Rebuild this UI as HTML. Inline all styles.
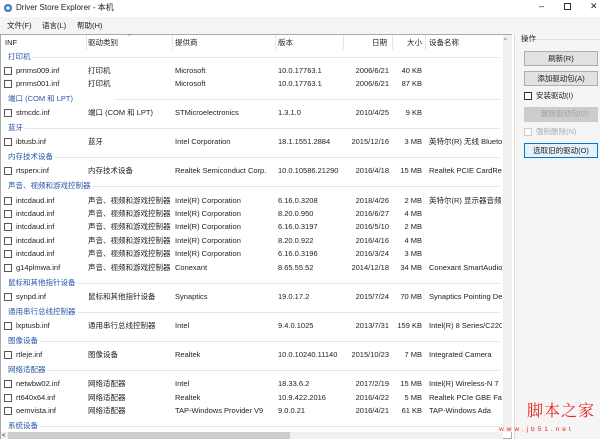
<!DOCTYPE html><html><head><meta charset="utf-8"><style>
*{margin:0;padding:0;box-sizing:border-box}
body{width:600px;height:439px;overflow:hidden;background:#fff;font-family:"Liberation Sans","Noto Sans CJK SC",sans-serif;font-size:7.5px;color:#222;position:relative}
.a{position:absolute;white-space:nowrap;line-height:10px}
.g{color:#2a55a8}
.ln{position:absolute;height:1px;background:#dfe6f0}
.cb{position:absolute;left:4px;width:8px;height:8px;border:1px solid #555;background:#fff}
.r{text-align:right}
.btn{position:absolute;left:524px;width:74px;height:15px;border:1px solid #adadad;background:#e1e1e1;text-align:center;line-height:13px;font-size:7.5px}
</style></head><body>
<div class="a" style="left:0;top:0;width:600px;height:17px;background:#fff"></div>
<svg class="a" style="left:3px;top:3px" width="10" height="10" viewBox="0 0 10 10"><circle cx="5" cy="5" r="4" fill="#3a78b8"/><circle cx="5" cy="5" r="1.8" fill="#fff"/></svg>
<div class="a" style="left:16px;top:3px;font-size:8px">Driver Store Explorer - 本机</div>
<div class="a" style="left:539px;top:1px;font-size:9px">–</div>
<div class="a" style="left:564px;top:3px;width:7px;height:7px;border:1px solid #333"></div>
<div class="a" style="left:590px;top:1px;font-size:9px">✕</div>
<div class="a" style="left:0;top:17px;width:600px;height:17px;background:#f4f4f4"></div>
<div class="a" style="left:7px;top:21px">文件(F)</div>
<div class="a" style="left:42px;top:21px">语言(L)</div>
<div class="a" style="left:77px;top:21px">帮助(H)</div>
<div class="a" style="left:0;top:34px;width:512px;height:405px;border:1px solid #aaa;background:#fff"></div>
<div class="a" style="left:503px;top:35px;width:9px;height:397px;background:#f0f0f0"></div>
<div class="a" style="left:504px;top:36px;font-size:6px;color:#555">^</div>
<div class="a" style="left:1px;top:432px;width:502px;height:7px;background:#f0f0f0"></div>
<div class="a" style="left:8px;top:432px;width:282px;height:7px;background:#cdcdcd"></div>
<div class="a" style="left:2px;top:431px;font-size:6px">&lt;</div>
<div class="a" style="left:514px;top:34px;width:86px;height:405px;background:#f5f5f5;border-left:1px solid #ddd"></div>
<div class="a" style="left:5px;top:38px">INF</div>
<div class="a" style="left:88px;top:38px">驱动类别</div>
<div class="a" style="left:128px;top:32px;font-size:6px;color:#777">^</div>
<div class="a" style="left:175px;top:38px">提供商</div>
<div class="a" style="left:278px;top:38px">版本</div>
<div class="a" style="left:372px;top:38px">日期</div>
<div class="a" style="left:407px;top:38px">大小</div>
<div class="a" style="left:429px;top:38px">设备名称</div>
<div class="a" style="left:86px;top:35px;width:1px;height:15px;background:#e5e5e5"></div>
<div class="a" style="left:172px;top:35px;width:1px;height:15px;background:#e5e5e5"></div>
<div class="a" style="left:275px;top:35px;width:1px;height:15px;background:#e5e5e5"></div>
<div class="a" style="left:343px;top:35px;width:1px;height:15px;background:#e5e5e5"></div>
<div class="a" style="left:392px;top:35px;width:1px;height:15px;background:#e5e5e5"></div>
<div class="a" style="left:425px;top:35px;width:1px;height:15px;background:#e5e5e5"></div>
<div id="rows"></div>
<div class="a" style="left:521px;top:34px">操作</div>
<div class="a" style="left:537px;top:39px;width:62px;height:1px;background:#ddd"></div>
<div class="btn" style="top:51px">刷新(R)</div>
<div class="btn" style="top:71px">添加驱动包(A)</div>
<div class="a" style="left:524px;top:92px;width:8px;height:8px;border:1px solid #333;background:#fff"></div>
<div class="a" style="left:536px;top:91px">安装驱动(I)</div>
<div class="btn" style="top:107px;color:#aaa;border-color:#ccc;background:#ccc"></div>
<div class="a" style="left:541px;top:109px;color:#a0a0a0">删除驱动包(D)</div>
<div class="a" style="left:524px;top:128px;width:8px;height:8px;border:1px solid #ccc;background:#fff"></div>
<div class="a" style="left:536px;top:127px;color:#aaa">强制删除(N)</div>
<div class="btn" style="top:143px;border:1px solid #0078d7;background:#e5f1fb">选取旧的驱动(O)</div>
<div class="a" style="left:527px;top:401px;font-size:16px;line-height:18px;color:#e8201e;font-family:'Noto Serif CJK SC',serif;letter-spacing:1px">脚本之家</div>
<div class="a" style="left:499px;top:425px;font-size:6.5px;color:#e8201e;letter-spacing:3px">www.jb51.net</div>
<script>
var R=[
["g","打印机",57],["r",71,"prnms009.inf","打印机","Microsoft","10.0.17763.1","2006/6/21","40 KB",""],
["r",84,"prnms001.inf","打印机","Microsoft","10.0.17763.1","2006/6/21","87 KB",""],
["g","端口 (COM 和 LPT)",99],["r",113,"stmcdc.inf","端口 (COM 和 LPT)","STMicroelectronics","1.3.1.0","2010/4/25","9 KB",""],
["g","蓝牙",128],["r",142,"ibtusb.inf","蓝牙","Intel Corporation","18.1.1551.2884","2015/12/16","3 MB","英特尔(R) 无线 Blueto"],
["g","内存技术设备",157],["r",171,"rtsperx.inf","内存技术设备","Realtek Semiconduct Corp.","10.0.10586.21290","2016/4/18","15 MB","Realtek PCIE CardRe"],
["g","声音、视频和游戏控制器",186],
["r",201,"intcdaud.inf","声音、视频和游戏控制器","Intel(R) Corporation","6.16.0.3208","2018/4/26","2 MB","英特尔(R) 显示器音频"],
["r",214,"intcdaud.inf","声音、视频和游戏控制器","Intel(R) Corporation","8.20.0.950","2016/6/27","4 MB",""],
["r",227,"intcdaud.inf","声音、视频和游戏控制器","Intel(R) Corporation","6.16.0.3197","2016/5/10","2 MB",""],
["r",241,"intcdaud.inf","声音、视频和游戏控制器","Intel(R) Corporation","8.20.0.922","2016/4/16","4 MB",""],
["r",254,"intcdaud.inf","声音、视频和游戏控制器","Intel(R) Corporation","6.16.0.3196","2016/3/24","3 MB",""],
["r",268,"g14plmwa.inf","声音、视频和游戏控制器","Conexant","8.65.55.52","2014/12/18","34 MB","Conexant SmartAudio"],
["g","鼠标和其他指针设备",283],["r",297,"synpd.inf","鼠标和其他指针设备","Synaptics","19.0.17.2","2015/7/24","70 MB","Synaptics Pointing De"],
["g","通用串行总线控制器",312],["r",326,"lxptusb.inf","通用串行总线控制器","Intel","9.4.0.1025","2013/7/31","159 KB","Intel(R) 8 Series/C220"],
["g","图像设备",341],["r",355,"rtleje.inf","图像设备","Realtek","10.0.10240.11140","2015/10/23","7 MB","Integrated Camera"],
["g","网络适配器",370],["r",384,"netwbw02.inf","网络适配器","Intel","18.33.6.2","2017/2/19","15 MB","Intel(R) Wireless-N 7"],
["r",398,"rt640x64.inf","网络适配器","Realtek","10.9.422.2016","2016/4/22","5 MB","Realtek PCIe GBE Far"],
["r",411,"oemvista.inf","网络适配器","TAP-Windows Provider V9","9.0.0.21","2016/4/21","61 KB","TAP-Windows Ada"],
["g","系统设备",426]];
var h="";R.forEach(function(x){
if(x[0]=="g"){var t=x[2]-5;h+='<div class="a g" style="left:8px;top:'+t+'px">'+x[1]+'</div><div class="ln" style="left:'+(10+x[1].length*7.5)+'px;top:'+(x[2])+'px;width:'+(490-x[1].length*7.5)+'px"></div>';}
else{var t=x[1]-5;h+='<div class="cb" style="top:'+(t+1)+'px"></div><div class="a" style="left:16px;top:'+t+'px">'+x[2]+'</div><div class="a" style="left:88px;top:'+t+'px">'+x[3]+'</div><div class="a" style="left:175px;top:'+t+'px">'+x[4]+'</div><div class="a" style="left:278px;top:'+t+'px">'+x[5]+'</div><div class="a r" style="left:340px;width:49px;top:'+t+'px">'+x[6]+'</div><div class="a r" style="left:390px;width:32px;top:'+t+'px">'+x[7]+'</div><div class="a" style="left:429px;top:'+t+'px;width:73px;overflow:hidden">'+x[8]+'</div>';}
});document.getElementById("rows").innerHTML=h;
</script>
</body></html>
